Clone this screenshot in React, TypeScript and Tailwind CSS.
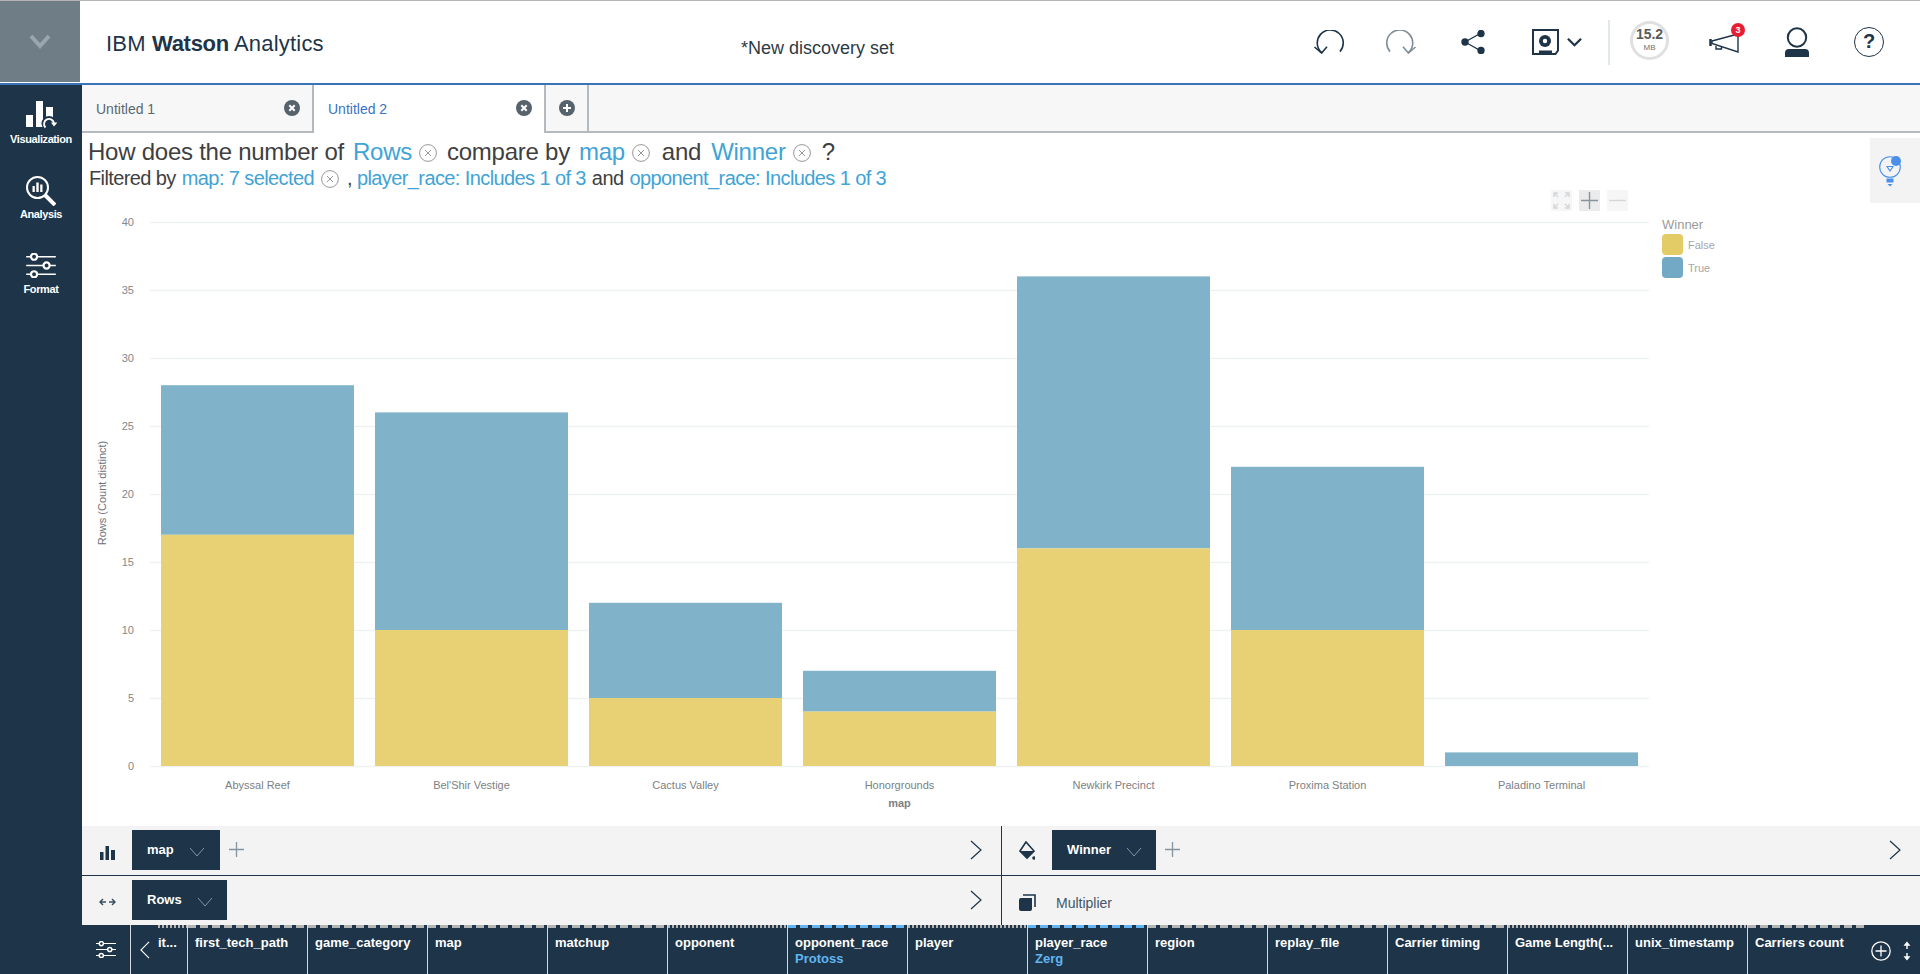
import React from 'react';

const NAVY = '#1e3448';

const bars = [
  { name: 'Abyssal Reef', no: 17, yes: 28 },
  { name: "Bel'Shir Vestige", no: 10, yes: 26 },
  { name: 'Cactus Valley', no: 5, yes: 12 },
  { name: 'Honorgrounds', no: 4, yes: 7 },
  { name: 'Newkirk Precinct', no: 16, yes: 36 },
  { name: 'Proxima Station', no: 10, yes: 22 },
  { name: 'Paladino Terminal', no: 0, yes: 1 },
];

const columns = [
  { name: 'first_tech_path', dash: 'wide' },
  { name: 'game_category', dash: 'wide' },
  { name: 'map', dash: 'wide' },
  { name: 'matchup', dash: 'wide' },
  { name: 'opponent', dash: 'fine' },
  { name: 'opponent_race', sub: 'Protoss', dash: 'blue' },
  { name: 'player', dash: 'fine' },
  { name: 'player_race', sub: 'Zerg', dash: 'blue' },
  { name: 'region', dash: 'wide' },
  { name: 'replay_file', dash: 'wide' },
  { name: 'Carrier timing', dash: 'wide' },
  { name: 'Game Length(...', dash: 'fine' },
  { name: 'unix_timestamp', dash: 'fine' },
  { name: 'Carriers count', dash: 'wide' },
];

const dashClass: Record<string, string> = {
  wide: 'bg-[repeating-linear-gradient(90deg,#b4b4b4_0_8px,transparent_8px_12px)]',
  fine: 'bg-[repeating-linear-gradient(90deg,#b4b4b4_0_2.5px,transparent_2.5px_4px)]',
  blue: 'bg-[repeating-linear-gradient(90deg,#62b5f2_0_8px,transparent_8px_12px)]',
};

const CloseCircle = ({ className }: { className: string }) => (
  <svg viewBox="0 0 18 18" className={className} fill="none" stroke="#8c8c8c">
    <circle cx="9" cy="9" r="8.4" strokeWidth="0.9" />
    <path d="M6 6l6 6M12 6l-6 6" strokeWidth="0.9" />
  </svg>
);

const TabBadge = ({ plus }: { plus?: boolean }) => (
  <svg viewBox="0 0 16 16" className="w-4 h-4">
    <circle cx="8" cy="8" r="8" fill="#56636c" />
    <path d={plus ? 'M4 8h8M8 4v8' : 'M5.3 5.3l5.4 5.4M10.7 5.3l-5.4 5.4'} stroke="#fff" strokeWidth="2" />
  </svg>
);

const Chevron = ({ className }: { className: string }) => (
  <svg viewBox="0 0 16 10" className={className} fill="none" stroke="#8494a0" strokeWidth="1">
    <path d="M1 1l7 8 7-8" />
  </svg>
);

const Chip = ({ label, width }: { label: string; width: string }) => (
  <div className={`h-10 bg-[#1e3448] flex items-center pl-[15px] ${width}`}>
    <span className="text-[13px] font-bold text-white mr-[15px]">{label}</span>
    <Chevron className="w-[16px] h-[10px] mt-1" />
  </div>
);

const PlusSign = () => (
  <svg viewBox="0 0 16 16" className="w-[15px] h-[15px] ml-[9px]" stroke="#8494a0" strokeWidth="1.4">
    <path d="M0 8h16M8 0v16" />
  </svg>
);

const RightArrow = () => (
  <svg viewBox="0 0 12 20" className="w-3 h-5" fill="none" stroke={NAVY} strokeWidth="1.2">
    <path d="M1 1l10 9-10 9" />
  </svg>
);

const SliderIcon = ({ className }: { className: string }) => (
  <svg viewBox="0 0 32 27" className={className} fill="none" stroke="#fff">
    <path d="M0 4h32M0 13.500h32M0 23h32" strokeWidth="1.7" />
    <circle cx="8.500" cy="4" r="3.300" fill={NAVY} strokeWidth="2.400" />
    <circle cx="22" cy="13.500" r="3.300" fill={NAVY} strokeWidth="2.400" />
    <circle cx="8.500" cy="23" r="3.300" fill={NAVY} strokeWidth="2.400" />
  </svg>
);

const Header = () => (
  <header className="h-[85px] border-t border-[#b5b5b5] border-b-2 border-b-[#3b73b9] bg-white flex shrink-0">
    <div className="w-20 h-[81px] bg-[#6f7d86] flex items-center justify-center">
      <svg viewBox="0 0 22 16" className="w-[22px] h-4" fill="none" stroke="#9aa6ad" strokeWidth="4">
        <path d="M2 2l9 10 9-10" />
      </svg>
    </div>
    <div className="ml-[26px] w-[635px] pt-[29px] text-[22px] leading-[28px] tracking-[0.2px] text-[#1e3448]">
      IBM <span className="font-bold tracking-[-0.3px]">Watson</span> Analytics
    </div>
    <div className="pt-[37px] text-[18px] leading-5 text-[#2d3a45]">*New discovery set</div>
    <div className="ml-auto flex items-center h-[82px] pr-[36px]">
      <svg viewBox="0 0 32 24" className="w-8 h-6 mr-[40px]" fill="none" stroke={NAVY} strokeWidth="1.600">
        <path d="M27 21.600A13 13 0 1 0 8.600 22.700" />
        <path d="M1.500 17L8.600 23L14 16.700" />
      </svg>
      <svg viewBox="0 0 32 24" className="w-8 h-6 mr-[44px]" fill="none" stroke="#7f8d98" strokeWidth="1.600">
        <path d="M5 21.600A13 13 0 1 1 23.400 22.700" />
        <path d="M30.500 17L23.400 23L18 16.700" />
      </svg>
      <svg viewBox="0 0 24 24" className="w-6 h-6 mr-[47px]" fill={NAVY} stroke={NAVY} strokeWidth="1.400">
        <path d="M4 12L20 3M4 12L20 21" />
        <circle cx="4" cy="12" r="3" />
        <circle cx="20" cy="3.500" r="3" />
        <circle cx="20" cy="20.500" r="3" />
      </svg>
      <svg viewBox="0 0 27 26" className="w-[27px] h-[26px] mr-[8px]">
        <path d="M1 1H26V21.500L23.500 25H1Z" fill="none" stroke={NAVY} strokeWidth="2" />
        <circle cx="13" cy="12" r="6" fill={NAVY} />
        <circle cx="13" cy="12" r="2.200" fill="#fff" />
        <rect x="7" y="21.500" width="13" height="3.500" fill={NAVY} />
      </svg>
      <svg viewBox="0 0 16 10" className="w-[15px] h-[10px] mr-[26px]" fill="none" stroke={NAVY} strokeWidth="2.400">
        <path d="M1 1.500l7 7 7-7" />
      </svg>
      <div className="w-0.5 h-[45px] bg-[#e3e9ea] mr-[20px]" />
      <div className="w-[39px] h-[39px] rounded-full border-[3px] border-[#e0e0e0] flex flex-col items-center justify-center mr-[40px] mb-[4px]">
        <span className="text-[14px] leading-[14px] font-bold text-[#5a5a5a] mt-[-1px]">15.2</span>
        <span className="text-[8px] leading-[10px] text-[#707070] mt-[2px]">MB</span>
      </div>
      <div className="relative w-[32px] h-[24px] mr-[44px] mt-[2px]">
        <svg viewBox="0 0 32 24" className="w-8 h-6" fill="none" stroke={NAVY} strokeWidth="1.400">
          <path d="M3 10L29 3V21L3 12.500Z" />
          <path d="M1.500 8V15" strokeWidth="2.500" />
          <path d="M7 15V18H12.500V16" />
        </svg>
        <span className="absolute -top-[8px] -right-[4px] w-[14px] h-[14px] rounded-full bg-[#e71d32] text-white text-[9px] leading-[14px] font-bold text-center">3</span>
      </div>
      <svg viewBox="0 0 24 30" className="w-6 h-[30px] mr-[45px]">
        <circle cx="12" cy="10.500" r="9.200" fill="none" stroke={NAVY} strokeWidth="2" />
        <path d="M0 30V26Q0 22 4 22H20Q24 22 24 26V30Z" fill={NAVY} />
      </svg>
      <div className="w-[30px] h-[30px] rounded-full border-[1.5px] border-[#1e3448] text-[#1e3448] text-[20px] leading-[27px] font-bold text-center">?</div>
    </div>
  </header>
);

const Sidebar = () => (
  <aside className="w-[82px] bg-[#1e3448] shrink-0 flex flex-col items-center text-white text-[11px] leading-[14px] font-bold tracking-[-0.4px]">
    <svg viewBox="0 0 32 30" className="w-8 h-[30px] mt-[14px]">
      <path d="M1 16H8V28H1ZM11 2H18V28H11ZM21 8H28V20H21Z" fill="#fff" />
      <circle cx="24" cy="24.500" r="7.500" fill={NAVY} />
      <path d="M20.500 28.500A5 5 0 1 1 29 24.500" fill="none" stroke="#fff" strokeWidth="1.900" />
      <path d="M26 23.500h6.500L29 27.500Z" fill="#fff" />
    </svg>
    <span className="mt-[3px]">Visualization</span>
    <svg viewBox="0 0 30 30" className="w-[30px] h-[30px] mt-[30px]">
      <circle cx="11.500" cy="11.500" r="10.500" fill="none" stroke="#fff" strokeWidth="2" />
      <path d="M6.500 10H8.800V16H6.500ZM10.300 6.500H12.700V16H10.300ZM14.200 8.500H16.500V16H14.200Z" fill="#fff" />
      <path d="M19 19L29 29" stroke="#fff" strokeWidth="4" />
    </svg>
    <span className="mt-[1px]">Analysis</span>
    <SliderIcon className="w-8 h-[25px] mt-[32px]" />
    <span className="mt-[4px]">Format</span>
  </aside>
);

const Tabs = () => (
  <div className="h-[48px] shrink-0 bg-[#f7f7f7] border-b-2 border-[#b3b9bc] flex text-[14px]">
    <div className="w-[232px] flex items-center justify-between pl-[14px] pr-[12px] border-r-2 border-[#b3b9bc] text-[#5a6872]">
      <span className="mt-[2px]">Untitled 1</span>
      <TabBadge />
    </div>
    <div className="w-[232px] h-[48px] pb-[2px] bg-white flex items-center justify-between pl-[14px] pr-[12px] border-r-2 border-[#b3b9bc] text-[#3b73c4]">
      <span className="mt-[2px]">Untitled 2</span>
      <TabBadge />
    </div>
    <div className="w-[43px] flex items-center justify-center border-r-2 border-[#b3b9bc]">
      <TabBadge plus />
    </div>
  </div>
);

const Question = () => (
  <div className="h-[57px] shrink-0 pl-[6px] pt-[5px] text-[#3f3f3f]">
    <div className="flex items-center h-[28px] text-[24px] leading-[28px] tracking-[-0.25px]">
      <span>How does the number of</span>
      <span className="ml-[9px] text-[#41a3d6]">Rows</span>
      <CloseCircle className="w-[18px] h-[18px] ml-[7px] mt-0.5" />
      <span className="ml-[10px]">compare by</span>
      <span className="ml-[9px] text-[#41a3d6]">map</span>
      <CloseCircle className="w-[18px] h-[18px] ml-[7px] mt-0.5" />
      <span className="ml-[12px]">and</span>
      <span className="ml-[10px] text-[#41a3d6]">Winner</span>
      <CloseCircle className="w-[18px] h-[18px] ml-[7px] mt-0.5" />
      <span className="ml-[11px]">?</span>
    </div>
    <div className="flex items-center h-[24px] text-[20px] leading-[24px] tracking-[-0.6px]">
      <span className="ml-[1px]">Filtered by</span>
      <span className="ml-[6px] text-[#41a3d6]">map: 7 selected</span>
      <CloseCircle className="w-[18px] h-[18px] ml-[7px] mt-0.5" />
      <span className="ml-[8px]">,</span>
      <span className="ml-[5px] text-[#41a3d6]">player_race: Includes 1 of 3</span>
      <span className="ml-[6px]">and</span>
      <span className="ml-[6px] text-[#41a3d6]">opponent_race: Includes 1 of 3</span>
    </div>
  </div>
);

const Chart = () => {
  const y = (v: number) => 766 - v * 13.6;
  return (
    <svg viewBox="82 190 1838 636" className="block w-[1838px] h-[636px] shrink-0">
      {[0, 5, 10, 15, 20, 25, 30, 35, 40].map((t) => (
        <g key={t}>
          <line x1="150" x2="1649" y1={y(t) + 0.5} y2={y(t) + 0.5} stroke="#eef2f2" strokeWidth="1.500" />
          <text x="134" y={y(t) + 4} textAnchor="end" fontSize="11" fill="#83888c">{t}</text>
        </g>
      ))}
      {bars.map((b, i) => {
        const x = 161 + i * 214;
        return (
          <g key={b.name}>
            <rect x={x} y={y(b.yes)} width="193" height={(b.yes - b.no) * 13.6} fill="#80b3ca" />
            <rect x={x} y={y(b.no)} width="193" height={b.no * 13.6} fill="#e8d174" />
            <text x={x + 96.5} y="789" textAnchor="middle" fontSize="11" fill="#7c8184">{b.name}</text>
          </g>
        );
      })}
      <text x="899.500" y="807" textAnchor="middle" fontSize="11" fontWeight="700" fill="#7c8184">map</text>
      <text transform="translate(106 493) rotate(-90)" textAnchor="middle" fontSize="11" fill="#6d7276">Rows (Count distinct)</text>
      <text x="1662" y="229" fontSize="13" fill="#9a9a9a">Winner</text>
      <rect x="1662" y="234" width="21" height="21" rx="4" fill="#e3cb66" />
      <rect x="1662" y="257" width="21" height="21" rx="4" fill="#73a9c4" />
      <text x="1688" y="249" fontSize="11" fill="#a6a6a6">False</text>
      <text x="1688" y="272" fontSize="11" fill="#a6a6a6">True</text>
    </svg>
  );
};

const ChartControls = () => (
  <div className="absolute left-[1469px] top-[105px] flex gap-[7px]">
    <div className="w-[21px] h-[21px] bg-[#f6f6f6] flex items-center justify-center">
      <svg viewBox="0 0 17 17" className="w-[17px] h-[17px]" fill="none" stroke="#d4d8da" strokeWidth="1.500">
        <path d="M1 5V1H5M1 1l4 4M16 5V1H12M16 1l-4 4M1 12V16H5M1 16l4-4M16 12V16H12M16 16l-4-4" />
      </svg>
    </div>
    <div className="w-[21px] h-[21px] bg-[#ebebeb] flex items-center justify-center">
      <svg viewBox="0 0 17 17" className="w-[17px] h-[17px]" stroke="#87949c" strokeWidth="1.400">
        <path d="M0 8.500h17M8.500 0v17" />
      </svg>
    </div>
    <div className="w-[21px] h-[21px] bg-[#f6f6f6] flex items-center justify-center">
      <svg viewBox="0 0 17 17" className="w-[17px] h-[17px]" stroke="#d4d8da" strokeWidth="1.400">
        <path d="M0 8.500h17" />
      </svg>
    </div>
  </div>
);

const Bulb = () => (
  <div className="absolute right-0 top-[53px] w-[50px] h-[65px] bg-[#f3f3f3] flex items-center justify-center pr-2">
    <svg viewBox="0 0 30 36" className="w-[30px] h-[36px]" fill="none" stroke="#4a90e8">
      <circle cx="14" cy="14" r="10.300" strokeWidth="1.100" />
      <path d="M11 13.500H17L14 18Z" strokeWidth="1.100" />
      <circle cx="20" cy="8" r="5" fill="#4a90e8" stroke="none" />
      <rect x="10.500" y="25.500" width="7" height="4" fill="#4a90e8" stroke="none" />
      <path d="M11.500 31H16.500L14 33.500Z" fill="#4a90e8" stroke="none" />
    </svg>
  </div>
);

const Shelves = () => (
  <div className="h-[99px] shrink-0 bg-[#f3f3f3] grid grid-cols-[920px_918px] grid-rows-[50px_49px]">
    <div className="border-r border-b border-[#1e3448] flex items-center pl-[18px] pr-[19px] pb-[2px]">
      <svg viewBox="0 0 15 14" className="w-[15px] h-[14px] mr-[17px] mt-[7px]" fill={NAVY}>
        <path d="M0 6H3.500V14H0ZM5.500 0H9V14H5.500ZM11 4H15V14H11Z" />
      </svg>
      <Chip label="map" width="w-[88px]" />
      <PlusSign />
      <div className="ml-auto"><RightArrow /></div>
    </div>
    <div className="border-b border-[#1e3448] flex items-center pl-[17px] pr-[19px] pb-[2px]">
      <svg viewBox="0 0 16 20" className="w-4 h-5 mr-[17px] mt-[3px]">
        <path d="M7 1L1 10L8 17L15 10L7 1Z" fill="none" stroke={NAVY} strokeWidth="1.600" />
        <path d="M1 10H15L8 17Z" fill={NAVY} />
        <circle cx="15" cy="17" r="1.800" fill={NAVY} />
      </svg>
      <Chip label="Winner" width="w-[104px]" />
      <PlusSign />
      <div className="ml-auto"><RightArrow /></div>
    </div>
    <div className="border-r border-[#1e3448] flex items-center pl-[17px] pr-[19px] pb-[2px]">
      <svg viewBox="0 0 17 10" className="w-[17px] h-[10px] mr-[16px] mt-[5px]" fill="none" stroke="#3d5163" strokeWidth="1.500">
        <path d="M1 5H7M4 2L1 5L4 8M10 5H16M13 2L16 5L13 8" />
      </svg>
      <Chip label="Rows" width="w-[95px]" />
      <div className="ml-auto"><RightArrow /></div>
    </div>
    <div className="flex items-center pl-[17px] text-[14px] text-[#44566a]">
      <svg viewBox="0 0 17 17" className="w-[17px] h-[17px] mr-[20px] mt-[4px]" fill="none">
        <path d="M0 6Q0 4 2 4H13V15Q13 17 11 17H2Q0 17 0 15Z" fill={NAVY} />
        <path d="M4 1H16V13" stroke={NAVY} strokeWidth="1.600" />
      </svg>
      <span className="mt-[6px]">Multiplier</span>
    </div>
  </div>
);

const FieldBar = () => (
  <footer className="h-[49px] shrink-0 bg-[#1e3448] flex text-white text-[13px] leading-[16px] font-bold">
    <div className="w-[49px] shrink-0 border-r border-[#d5d9dc] flex items-center justify-center">
      <SliderIcon className="w-5 h-[17px]" />
    </div>
    <div className="w-[56px] shrink-0 flex relative">
      <svg viewBox="0 0 11 20" className="w-[10px] h-[18px] ml-[9px] mt-[16px]" fill="none" stroke="#fff" strokeWidth="1.200">
        <path d="M10 1L1 10L10 19" />
      </svg>
      <div className="absolute left-[27px] right-0 top-0">
        <div className={`h-[3px] ${dashClass.fine}`} />
        <div className="pt-[7px]">it...</div>
      </div>
    </div>
    {columns.map((c) => (
      <div key={c.name} className="w-[120px] shrink-0 border-l border-[#d5d9dc]">
        <div className={`h-[3px] ${dashClass[c.dash]}`} />
        <div className="pt-[7px] pl-[7px] whitespace-nowrap">{c.name}</div>
        {c.sub && <div className="pl-[7px] text-[#62b5f2]">{c.sub}</div>}
      </div>
    ))}
    <div className="flex-1 flex items-center pl-[4px] pt-[3px]">
      <svg viewBox="0 0 20 20" className="w-5 h-5" fill="none" stroke="#fff" strokeWidth="1.300">
        <circle cx="10" cy="10" r="9.200" />
        <path d="M4.500 10h11M10 4.500v11" />
      </svg>
      <svg viewBox="0 0 8 20" className="w-2 h-5 ml-[12px]" fill="#fff" stroke="#fff" strokeWidth="1.400">
        <path d="M4 8V2M4 12V18" />
        <path d="M2 4L4 1.500L6 4ZM2 16L4 18.500L6 16Z" />
      </svg>
    </div>
  </footer>
);

export default function App() {
  return (
    <div className="w-[1920px] h-[974px] overflow-hidden flex flex-col bg-white font-['Liberation_Sans',Arial,sans-serif]">
      <Header />
      <div className="flex-1 flex min-h-0">
        <Sidebar />
        <main className="relative flex-1 min-w-0 flex flex-col">
          <Tabs />
          <Question />
          <Chart />
          <ChartControls />
          <Bulb />
          <Shelves />
          <FieldBar />
        </main>
      </div>
    </div>
  );
}
